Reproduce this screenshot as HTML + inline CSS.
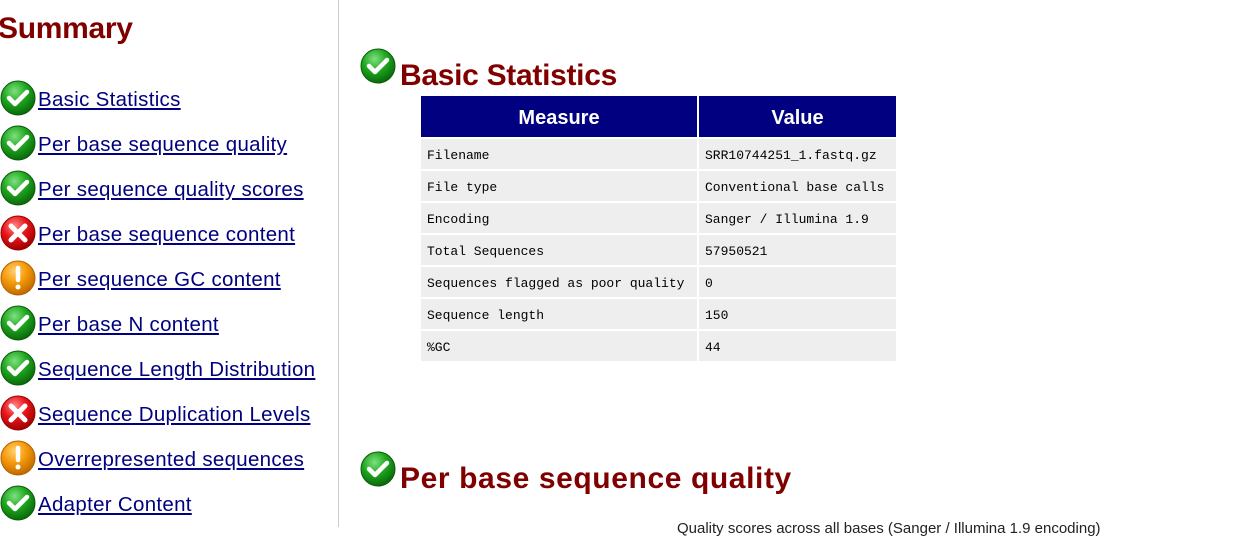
<!DOCTYPE html>
<html><head><meta charset="utf-8"><style>
body{margin:0;width:1242px;height:527px;overflow:hidden;background:#fff;font-family:"Liberation Sans",sans-serif;position:relative}
#side{position:absolute;left:0;top:0;width:338px;height:527px;border-right:1px solid #ccc}
h2{margin:0;position:absolute;color:#800000;font-size:30px;font-weight:bold;white-space:nowrap;letter-spacing:-0.3px}
.item{position:absolute;left:0;height:36px;white-space:nowrap}
.item svg{position:absolute;left:0;top:0}
.item a{position:absolute;left:38px;top:8px;color:#000080;font-size:20.5px;text-decoration:underline;letter-spacing:0.3px}
.ic{position:absolute}
table{position:absolute;left:419px;top:94px;border-spacing:2px;border-collapse:separate}
th{background:#000080;color:#fff;font-size:20px;height:41px;padding:4px 0 0;font-weight:bold;box-sizing:border-box}
td{background:#eee;font-family:"Liberation Mono",monospace;font-size:13px;height:30px;box-sizing:border-box;padding:2px 6px 0;white-space:nowrap}
</style></head><body>
<svg width="0" height="0" style="position:absolute">
<defs>
<radialGradient id="g" cx="40%" cy="30%" r="70%"><stop offset="0" stop-color="#7fe07f"/><stop offset=".5" stop-color="#1fa81f"/><stop offset="1" stop-color="#0a6a0a"/></radialGradient>
<radialGradient id="r" cx="40%" cy="30%" r="70%"><stop offset="0" stop-color="#ff8a8a"/><stop offset=".5" stop-color="#e8151a"/><stop offset="1" stop-color="#a00000"/></radialGradient>
<radialGradient id="o" cx="40%" cy="30%" r="70%"><stop offset="0" stop-color="#ffd070"/><stop offset=".5" stop-color="#f59a0a"/><stop offset="1" stop-color="#c06a00"/></radialGradient>
<g id="ok"><circle cx="18" cy="18" r="17" fill="url(#g)" stroke="#0a5a0a" stroke-width="1"/><path d="M9 18l6 6 12-12" fill="none" stroke="#fff" stroke-width="4.5" stroke-linecap="round" stroke-linejoin="round"/></g>
<g id="bad"><circle cx="18" cy="18" r="17" fill="url(#r)" stroke="#900" stroke-width="1"/><path d="M11 11l14 14M25 11L11 25" stroke="#fff" stroke-width="5" stroke-linecap="round"/></g>
<g id="warn"><circle cx="18" cy="18" r="17" fill="url(#o)" stroke="#b06000" stroke-width="1"/><path d="M18 8v12" stroke="#fff" stroke-width="4.5" stroke-linecap="round"/><circle cx="18" cy="27" r="2.5" fill="#fff"/></g>
</defs></svg>
<div id="side">
<h2 style="left:-2px;top:12px">Summary</h2>
<div class="item" style="top:80px"><svg width="36" height="36"><use href="#ok"/></svg><a>Basic Statistics</a></div>
<div class="item" style="top:125px"><svg width="36" height="36"><use href="#ok"/></svg><a>Per base sequence quality</a></div>
<div class="item" style="top:170px"><svg width="36" height="36"><use href="#ok"/></svg><a>Per sequence quality scores</a></div>
<div class="item" style="top:215px"><svg width="36" height="36"><use href="#bad"/></svg><a>Per base sequence content</a></div>
<div class="item" style="top:260px"><svg width="36" height="36"><use href="#warn"/></svg><a>Per sequence GC content</a></div>
<div class="item" style="top:305px"><svg width="36" height="36"><use href="#ok"/></svg><a>Per base N content</a></div>
<div class="item" style="top:350px"><svg width="36" height="36"><use href="#ok"/></svg><a>Sequence Length Distribution</a></div>
<div class="item" style="top:395px"><svg width="36" height="36"><use href="#bad"/></svg><a>Sequence Duplication Levels</a></div>
<div class="item" style="top:440px"><svg width="36" height="36"><use href="#warn"/></svg><a>Overrepresented sequences</a></div>
<div class="item" style="top:485px"><svg width="36" height="36"><use href="#ok"/></svg><a>Adapter Content</a></div>
</div>
<svg class="ic" style="left:360px;top:48px" width="36" height="36"><use href="#ok"/></svg>
<h2 style="left:400px;top:59px">Basic Statistics</h2>
<table>
<tr><th style="width:276px">Measure</th><th style="width:197px">Value</th></tr>
<tr><td>Filename</td><td>SRR10744251_1.fastq.gz</td></tr>
<tr><td>File type</td><td>Conventional base calls</td></tr>
<tr><td>Encoding</td><td>Sanger / Illumina 1.9</td></tr>
<tr><td>Total Sequences</td><td>57950521</td></tr>
<tr><td>Sequences flagged as poor quality</td><td>0</td></tr>
<tr><td>Sequence length</td><td>150</td></tr>
<tr><td>%GC</td><td>44</td></tr>
</table>
<svg class="ic" style="left:360px;top:451px" width="36" height="36"><use href="#ok"/></svg>
<h2 style="left:400px;top:462px;letter-spacing:0.6px">Per base sequence quality</h2>
<div style="position:absolute;left:677px;top:520px;font-size:15px;color:#222;white-space:nowrap">Quality scores across all bases (Sanger / Illumina 1.9 encoding)</div>
</body></html>
